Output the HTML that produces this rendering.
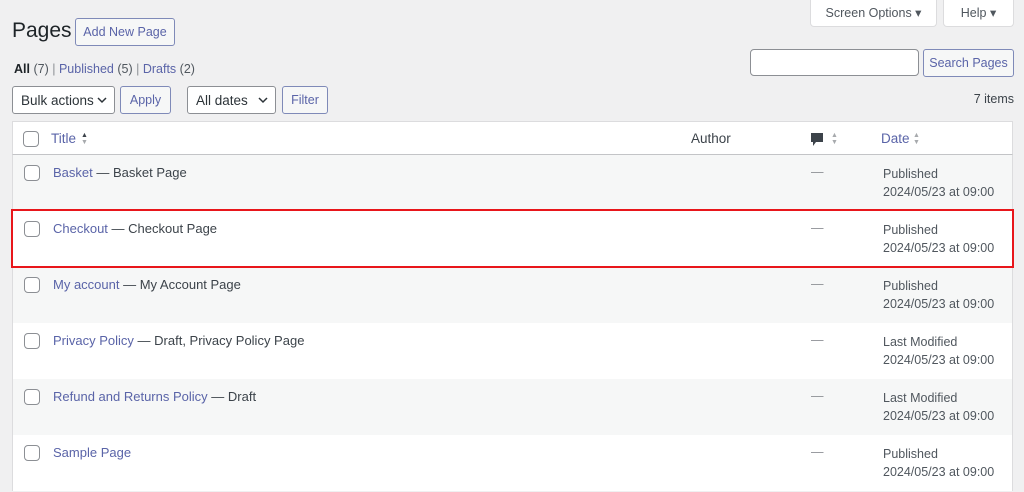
<!DOCTYPE html><html><head><style>
body{margin:0;width:1024px;height:492px;background:#f0f0f1;font-family:"Liberation Sans",sans-serif;font-size:12.5px;color:#3c434a;position:relative;overflow:hidden}
.a{position:absolute}
.btn{position:absolute;border:1px solid #7f8ab8;border-radius:3px;background:#f6f7f7;color:#5a64a8;font-size:12.5px;text-align:center;box-sizing:border-box;white-space:nowrap}
.sel{position:absolute;border:1px solid #8c8f94;border-radius:3px;background:#fff;color:#2c3338;font-size:13.5px;box-sizing:border-box;padding-left:8px;white-space:nowrap}
.sel svg{position:absolute;right:7px;top:10px}
a{color:#5a64a8;text-decoration:none}
.row{position:absolute;left:12px;width:1001px;height:56px;box-sizing:border-box;border-left:1px solid #dcdcde;border-right:1px solid #dcdcde}
.cb{position:absolute;left:11px;top:10px;width:14px;height:14px;border:1px solid #8c8f94;border-radius:4px;background:#fff}
.t{position:absolute;left:40px;top:10px;font-size:13px;white-space:nowrap}
.dash{position:absolute;left:798px;top:10px;color:#8c8f94}
.d{position:absolute;left:870px;top:10px;line-height:18px;color:#50575e;font-size:12.5px}
.ar{position:absolute;font-size:7px;line-height:7px;color:#a7aaad}
</style></head><body>
<div class="a" style="left:810px;top:0;width:127px;height:27px;background:#fff;border:1px solid #dcdcde;border-top:0;border-radius:0 0 4px 4px;box-sizing:border-box;text-align:center;line-height:26px;color:#50575e">Screen Options ▾</div>
<div class="a" style="left:943px;top:0;width:71px;height:27px;background:#fff;border:1px solid #dcdcde;border-top:0;border-radius:0 0 4px 4px;box-sizing:border-box;text-align:center;line-height:26px;color:#50575e">Help ▾</div>
<div class="a" style="left:12px;top:19px;font-size:21px;color:#1d2327">Pages</div>
<div class="btn" style="left:75px;top:18px;width:100px;height:28px;line-height:27px">Add New Page</div>
<div class="a" style="left:14px;top:62px;font-size:12.5px;color:#8c8f94"><b style="color:#1d2327">All</b> <span style="color:#50575e">(7)</span> | <a>Published</a> <span style="color:#50575e">(5)</span> | <a>Drafts</a> <span style="color:#50575e">(2)</span></div>
<div class="a" style="left:750px;top:49px;width:169px;height:27px;background:#fff;border:1px solid #8c8f94;border-radius:4px;box-sizing:border-box"></div>
<div class="btn" style="left:923px;top:49px;width:91px;height:28px;line-height:27px">Search Pages</div>
<div class="sel" style="left:12px;top:86px;width:103px;height:28px;line-height:27px">Bulk actions<svg width="10" height="7"><path d="M1 1l4 4 4-4" stroke="#2c3338" stroke-width="1.5" fill="none"/></svg></div>
<div class="btn" style="left:120px;top:86px;width:51px;height:28px;line-height:27px">Apply</div>
<div class="sel" style="left:187px;top:86px;width:89px;height:28px;line-height:27px">All dates<svg width="10" height="7"><path d="M1 1l4 4 4-4" stroke="#2c3338" stroke-width="1.5" fill="none"/></svg></div>
<div class="btn" style="left:282px;top:86px;width:46px;height:28px;line-height:27px">Filter</div>
<div class="a" style="right:10px;top:92px;color:#3c434a">7 items</div>
<div class="a" style="left:12px;top:121px;width:1001px;height:34px;background:#fff;border:1px solid #dcdcde;border-bottom-color:#c3c4c7;box-sizing:border-box">
<div class="cb" style="top:9px;left:10px"></div>
<a class="a" style="left:38px;top:9px;font-size:13.5px">Title</a><span class="ar" style="left:68px;top:10px"><span style="color:#3c434a">▲</span><br>▼</span>
<span class="a" style="left:678px;top:9px;font-size:13.5px;color:#3c434a">Author</span>
<svg class="a" style="left:797px;top:10px" width="14" height="15"><path d="M1 1h12v9H6l-3 4v-4H1z" fill="#3c434a"/></svg>
<span class="ar" style="left:818px;top:10px">▲<br>▼</span>
<a class="a" style="left:868px;top:9px;font-size:13.5px">Date</a><span class="ar" style="left:900px;top:10px">▲<br>▼</span>
</div>
<div class="row" style="top:155px;background:#f6f7f7"><div class="cb"></div><div class="t"><a>Basket</a> — Basket Page</div><div class="dash">—</div><div class="d">Published<br>2024/05/23 at 09:00</div></div>
<div class="row" style="top:211px;background:#fff"><div class="cb"></div><div class="t"><a>Checkout</a> — Checkout Page</div><div class="dash">—</div><div class="d">Published<br>2024/05/23 at 09:00</div></div>
<div class="row" style="top:267px;background:#f6f7f7"><div class="cb"></div><div class="t"><a>My account</a> — My Account Page</div><div class="dash">—</div><div class="d">Published<br>2024/05/23 at 09:00</div></div>
<div class="row" style="top:323px;background:#fff"><div class="cb"></div><div class="t"><a>Privacy Policy</a> — Draft, Privacy Policy Page</div><div class="dash">—</div><div class="d">Last Modified<br>2024/05/23 at 09:00</div></div>
<div class="row" style="top:379px;background:#f6f7f7"><div class="cb"></div><div class="t"><a>Refund and Returns Policy</a> — Draft</div><div class="dash">—</div><div class="d">Last Modified<br>2024/05/23 at 09:00</div></div>
<div class="row" style="top:435px;background:#fff"><div class="cb"></div><div class="t"><a>Sample Page</a></div><div class="dash">—</div><div class="d">Published<br>2024/05/23 at 09:00</div></div>
<div class="a" style="left:11px;top:209px;width:1003px;height:59px;border:2px solid #e8161b;box-sizing:border-box"></div>
</body></html>
